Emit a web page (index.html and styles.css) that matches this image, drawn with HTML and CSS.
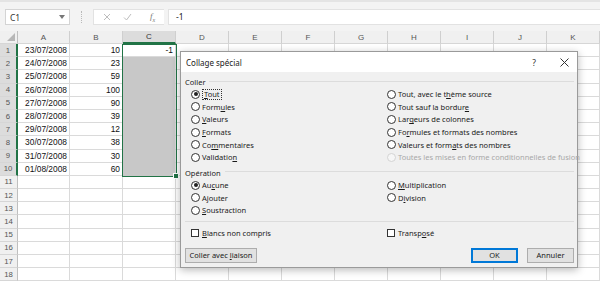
FILE: index.html
```html
<!DOCTYPE html>
<html lang="fr">
<head>
<meta charset="utf-8">
<title>Collage spécial</title>
<link rel="stylesheet" href="styles.css">
</head>
<body>
<div class="app">
  <div class="fbar">
    <div class="namebox"><span>C1</span><svg class="dd" width="6" height="4" viewBox="0 0 6 4"><path d="M0 0h6L3 4z" fill="#777"/></svg></div>
    <div class="grip"></div>
    <div class="fbtns">
      <svg width="8" height="8" viewBox="0 0 8 8"><path d="M1 1l6 6M7 1L1 7" stroke="#bdbdbd" stroke-width="1"/></svg>
      <svg width="9" height="8" viewBox="0 0 9 8"><path d="M1 4.5l2.5 2.5L8 1" stroke="#bdbdbd" stroke-width="1" fill="none"/></svg>
      <span class="fx">f<sub>x</sub></span>
    </div>
    <div class="finput">-1</div>
  </div>

  <div class="sheet">
    <div class="row hdr"><b class="corner"><svg width="8" height="8" viewBox="0 0 8 8"><path d="M8 0v8H0z" fill="#b7b7b7"/></svg></b><b>A</b><b>B</b><b class="hs">C</b><b>D</b><b>E</b><b>F</b><b>G</b><b>H</b><b>I</b><b>J</b><b>K</b></div>
    <div class="row"><b class="hs">1</b><i>23/07/2008</i><i>10</i><i class="act">-1</i><i></i><i></i><i></i><i></i><i></i><i></i><i></i><i></i></div>
    <div class="row"><b class="hs">2</b><i>24/07/2008</i><i>23</i><i class="sel"></i><i></i><i></i><i></i><i></i><i></i><i></i><i></i><i></i></div>
    <div class="row"><b class="hs">3</b><i>25/07/2008</i><i>59</i><i class="sel"></i><i></i><i></i><i></i><i></i><i></i><i></i><i></i><i></i></div>
    <div class="row"><b class="hs">4</b><i>26/07/2008</i><i>100</i><i class="sel"></i><i></i><i></i><i></i><i></i><i></i><i></i><i></i><i></i></div>
    <div class="row"><b class="hs">5</b><i>27/07/2008</i><i>90</i><i class="sel"></i><i></i><i></i><i></i><i></i><i></i><i></i><i></i><i></i></div>
    <div class="row"><b class="hs">6</b><i>28/07/2008</i><i>39</i><i class="sel"></i><i></i><i></i><i></i><i></i><i></i><i></i><i></i><i></i></div>
    <div class="row"><b class="hs">7</b><i>29/07/2008</i><i>12</i><i class="sel"></i><i></i><i></i><i></i><i></i><i></i><i></i><i></i><i></i></div>
    <div class="row"><b class="hs">8</b><i>30/07/2008</i><i>38</i><i class="sel"></i><i></i><i></i><i></i><i></i><i></i><i></i><i></i><i></i></div>
    <div class="row"><b class="hs">9</b><i>31/07/2008</i><i>30</i><i class="sel"></i><i></i><i></i><i></i><i></i><i></i><i></i><i></i><i></i></div>
    <div class="row"><b class="hs">10</b><i>01/08/2008</i><i>60</i><i class="sel"></i><i></i><i></i><i></i><i></i><i></i><i></i><i></i><i></i></div>
    <div class="row"><b>11</b><i></i><i></i><i></i><i></i><i></i><i></i><i></i><i></i><i></i><i></i><i></i></div>
    <div class="row"><b>12</b><i></i><i></i><i></i><i></i><i></i><i></i><i></i><i></i><i></i><i></i><i></i></div>
    <div class="row"><b>13</b><i></i><i></i><i></i><i></i><i></i><i></i><i></i><i></i><i></i><i></i><i></i></div>
    <div class="row"><b>14</b><i></i><i></i><i></i><i></i><i></i><i></i><i></i><i></i><i></i><i></i><i></i></div>
    <div class="row"><b>15</b><i></i><i></i><i></i><i></i><i></i><i></i><i></i><i></i><i></i><i></i><i></i></div>
    <div class="row"><b>16</b><i></i><i></i><i></i><i></i><i></i><i></i><i></i><i></i><i></i><i></i><i></i></div>
    <div class="row"><b>17</b><i></i><i></i><i></i><i></i><i></i><i></i><i></i><i></i><i></i><i></i><i></i></div>
    <div class="row"><b>18</b><i></i><i></i><i></i><i></i><i></i><i></i><i></i><i></i><i></i><i></i><i></i></div>
  </div>

  <div class="selbox"><span class="handle"></span></div>

  <div class="dialog">
    <div class="dtitle">
      <span class="dname">Collage spécial</span>
      <span class="help">?</span>
      <svg class="close" width="9" height="9" viewBox="0 0 9 9"><path d="M0.5 0.5l8 8M8.5 0.5l-8 8" stroke="#333" stroke-width="1"/></svg>
    </div>
    <div class="dbody">
      <div class="group"><span>Coller</span></div>
      <div class="opts">
        <div class="opt"><i class="rb on"></i><span class="focus"><u>T</u>out</span></div>
        <div class="opt"><i class="rb"></i><span>Tout, avec le t<u>h</u>ème source</span></div>
        <div class="opt"><i class="rb"></i><span>Form<u>u</u>les</span></div>
        <div class="opt"><i class="rb"></i><span>Tout sauf la bordur<u>e</u></span></div>
        <div class="opt"><i class="rb"></i><span><u>V</u>aleurs</span></div>
        <div class="opt"><i class="rb"></i><span>Lar<u>g</u>eurs de colonnes</span></div>
        <div class="opt"><i class="rb"></i><span><u>F</u>ormats</span></div>
        <div class="opt"><i class="rb"></i><span>Fo<u>r</u>mules et formats des nombres</span></div>
        <div class="opt"><i class="rb"></i><span>Co<u>m</u>mentaires</span></div>
        <div class="opt"><i class="rb"></i><span>Valeurs et form<u>a</u>ts des nombres</span></div>
        <div class="opt"><i class="rb"></i><span>Validatio<u>n</u></span></div>
        <div class="opt dis"><i class="rb"></i><span>Toutes les mises en forme conditionnelles de fusion</span></div>
      </div>
      <div class="group g2"><span>Opération</span></div>
      <div class="opts">
        <div class="opt"><i class="rb on"></i><span>Au<u>c</u>une</span></div>
        <div class="opt"><i class="rb"></i><span><u>M</u>ultiplication</span></div>
        <div class="opt"><i class="rb"></i><span>A<u>j</u>outer</span></div>
        <div class="opt"><i class="rb"></i><span>D<u>i</u>vision</span></div>
        <div class="opt"><i class="rb"></i><span><u>S</u>oustraction</span></div>
        <div class="opt"></div>
      </div>
      <div class="sep"></div>
      <div class="opts checks">
        <div class="opt"><i class="cb"></i><span><u>B</u>lancs non compris</span></div>
        <div class="opt"><i class="cb"></i><span>Transp<u>o</u>sé</span></div>
      </div>
      <div class="btns">
        <span class="btn wide"><span>Coller avec <u>l</u>iaison</span></span>
        <span class="spacer"></span>
        <span class="btn def"><span>OK</span></span>
        <span class="btn"><span>Annuler</span></span>
      </div>
    </div>
  </div>
</div>
</body>
</html>
```

FILE: styles.css
```css
html, body {
  margin: 0;
  padding: 0;
}
body {
  width: 600px;
  height: 283px;
  overflow: hidden;
  background: #ffffff;
  font-family: "Noto Sans", "DejaVu Sans", sans-serif;
  color: #1e1e1e;
}
.app {
  position: relative;
  width: 600px;
  height: 283px;
}

/* formula bar */
.fbar {
  height: 31px;
  box-sizing: border-box;
  background: #f3f3f3;
  border-top: 2px solid #e4e4e4;
  padding-top: 7px;
  display: flex;
  align-items: flex-start;
}
.namebox {
  margin-left: 5px;
  width: 65px;
  height: 16px;
  box-sizing: border-box;
  background: #fff;
  border: 1px solid #d4d4d4;
  display: flex;
  align-items: center;
  justify-content: space-between;
  padding: 0 4px 0 4px;
  font-size: 8.5px;
  color: #333;
}
.grip {
  width: 1px;
  height: 12px;
  margin: 2px 10px 0 11px;
  border-left: 1px dotted #b9b9b9;
}
.fbtns {
  width: 71px;
  height: 16px;
  box-sizing: border-box;
  background: #fff;
  border: 1px solid #e2e2e2;
  border-right: none;
  display: flex;
  align-items: center;
  gap: 12px;
  padding-left: 9px;
}
.fx {
  font-family: "Liberation Serif", serif;
  font-style: italic;
  font-size: 9px;
  color: #777;
  margin-left: 6px;
}
.fx sub {
  font-size: 6px;
}
.finput {
  margin-left: 4px;
  flex: 1;
  height: 16px;
  box-sizing: border-box;
  background: #fff;
  border: 1px solid #e2e2e2;
  border-right: none;
  font-size: 8.5px;
  color: #222;
  padding-left: 7px;
  line-height: 14px;
}

/* sheet */
.sheet {
  display: grid;
  grid-template-rows: 13px repeat(18, 13.2px);
}
.row {
  display: grid;
  grid-template-columns: 18px 52px repeat(10, 53px);
}
.row b, .row i {
  box-sizing: border-box;
  font-style: normal;
  font-weight: normal;
  overflow: hidden;
  white-space: nowrap;
}
.row b {
  background: #f0f0f0;
  border-right: 1px solid #cfcfcf;
  border-bottom: 1px solid #d6d6d6;
  font-family: "Liberation Sans", Arial, sans-serif;
  font-size: 8px;
  color: #555;
  display: flex;
  align-items: center;
  justify-content: center;
}
.row b.hs {
  background: #dcdcdc;
}
.hdr b.hs {
  border-bottom: 2px solid #217346;
  color: #333;
}
.row b:first-child {
  border-right: 1px solid #bfbfbf;
  font-size: 7.8px;
}
.row b:first-child.hs {
  border-right: 2px solid #217346;
}
.hdr b.corner {
  justify-content: flex-end;
  align-items: flex-end;
  padding: 0 2px 2px 0;
  border-right: 1px solid #bfbfbf;
}
.row i {
  border-right: 1px solid #dadada;
  border-bottom: 1px solid #dadada;
  font-family: "Liberation Sans", Arial, sans-serif;
  font-size: 8.4px;
  color: #111;
  text-align: right;
  padding-right: 2px;
  line-height: 13px;
}
.row i.sel {
  background: #c8c8c8;
  border-bottom-color: #c8c8c8;
}

.selbox {
  position: absolute;
  left: 122px;
  top: 44px;
  width: 55px;
  height: 133px;
  box-sizing: border-box;
  border: 1.5px solid #217346;
}
.handle {
  position: absolute;
  right: -3px;
  bottom: -3px;
  width: 4px;
  height: 4px;
  background: #217346;
  border: 1px solid #fff;
}

/* dialog */
.dialog {
  position: absolute;
  left: 180px;
  top: 51px;
  width: 398px;
  height: 217px;
  box-sizing: border-box;
  border: 1px solid #9a9a9a;
  background: #f0f0f0;
  box-shadow: 0 2px 8px rgba(0, 0, 0, 0.28);
  font-size: 7.5px;
  color: #1a1a1a;
}
.dtitle {
  height: 20px;
  background: #fff;
  display: flex;
  align-items: center;
  padding-left: 5px;
  font-size: 8px;
}
.dname {
  flex: 1;
}
.help {
  font-size: 8.5px;
  margin-right: 24px;
  color: #333;
}
.close {
  margin-right: 8px;
}
.dbody {
  padding: 4px 3px 0 4px;
}
.group {
  height: 12px;
  display: flex;
  align-items: center;
  gap: 4px;
}
.group::after {
  content: "";
  flex: 1;
  height: 1px;
  background: #dcdcdc;
  margin-top: -2px;
}
.g2 {
  margin-top: 3.4px;
}
.opts {
  display: grid;
  grid-template-columns: 196px 1fr;
  grid-auto-rows: 12.6px;
  margin-left: 6px;
}
.opt {
  display: flex;
  align-items: center;
  white-space: nowrap;
}
.opt u, .btn u {
  text-decoration: underline;
  text-underline-offset: 1px;
}
.rb {
  width: 9px;
  height: 9px;
  box-sizing: border-box;
  border: 1px solid #333;
  border-radius: 50%;
  background: #fff;
  margin-right: 2px;
  position: relative;
  flex: none;
}
.rb.on::after {
  content: "";
  position: absolute;
  left: 1.5px;
  top: 1.5px;
  width: 4px;
  height: 4px;
  border-radius: 50%;
  background: #222;
}
.focus {
  outline: 1px dotted #333;
  outline-offset: 0;
  padding: 0 1px;
  margin-left: 1px;
  line-height: 9px;
}
.dis {
  color: #a8a8a8;
}
.dis .rb {
  border-color: #d4d4d4;
  background: #f6f6f6;
}
.sep {
  height: 1px;
  background: #dcdcdc;
  margin: 4px 0 5px 0;
}
.checks {
  grid-auto-rows: 12px;
}
.cb {
  width: 8px;
  height: 8px;
  box-sizing: border-box;
  border: 1px solid #333;
  background: #fff;
  margin-right: 3px;
  flex: none;
}
.btns {
  display: flex;
  margin-top: 9px;
  gap: 9px;
}
.spacer {
  flex: 1;
}
.btn {
  width: 47px;
  height: 15px;
  box-sizing: border-box;
  background: #e1e1e1;
  border: 1px solid #adadad;
  display: flex;
  align-items: center;
  justify-content: center;
  font-size: 7.5px;
  white-space: nowrap;
}
.btn.wide {
  width: 72px;
}
.btn.def {
  border: 1px solid #0078d7;
  box-shadow: inset 0 0 0 1px #0078d7;
}
```
